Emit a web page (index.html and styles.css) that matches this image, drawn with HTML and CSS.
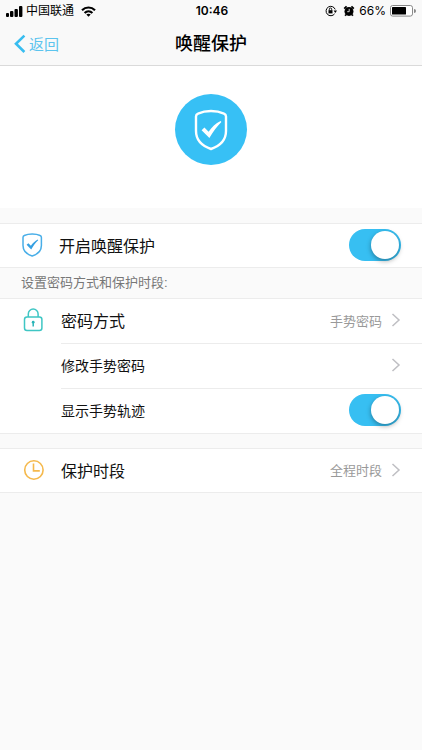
FILE: index.html
```
<!DOCTYPE html>
<html lang="zh-CN">
<head>
<meta charset="utf-8">
<meta name="viewport" content="width=device-width, initial-scale=1">
<title>唤醒保护</title>
<link rel="stylesheet" href="styles.css">
</head>

<body>
<header class="header">
	<div class="status">
		<div class="status-left">
			<svg width="17" height="11" viewBox="0 0 17 11">
				<rect x="0" y="7" width="3" height="4" rx="1"/>
				<rect x="4" y="5" width="3.4" height="6" rx="1"/>
				<rect x="8.500" y="3" width="3.400" height="8" rx="1"/>
				<rect x="13" y="0" width="3.400" height="11" rx="1"/>
			</svg>
			<span class="carrier">中国联通</span>
			<svg class="wifi" width="15" height="11" viewBox="0 0 15 11" fill="none" stroke="#000" stroke-width="2.200">
				<path d="M1 4.200C4.700.6 10.300.6 14 4.200"/>
				<path d="M3.600 7C5.800 4.900 9.200 4.900 11.400 7"/>
				<path d="M7.500 10.800L5.300 8.600C6.500 7.500 8.500 7.500 9.700 8.600Z" fill="#000" stroke="none"/>
			</svg>
		</div>
		<span class="clock">10:46</span>
		<div class="status-right">
			<svg width="12" height="12" viewBox="0 0 12 12" fill="none" stroke="#000">
				<path d="M9.600 8.800A4.700 4.700 0 1 1 10.200 4.400"/>
				<path d="M8.600 5.600H12L10.300 8Z" fill="#000" stroke="none"/>
				<rect x="3.500" y="5.200" width="4" height="3.200" fill="#000" stroke="none"/>
				<path d="M4.300 5.400V4.200a1.200 1.200 0 0 1 2.400 0v1.200" stroke-width=".9"/>
			</svg>
			<svg class="alarm" width="12" height="12" viewBox="0 0 12 12">
				<circle cx="6" cy="6.400" r="4.500"/>
				<path d="M1.200 3.600L3.600 1.400M8.400 1.400L10.800 3.600M3 9.600L2.200 10.800M9 9.600L9.800 10.800" stroke="#000" stroke-width="1.800"/>
				<path d="M6.200 3.900V6.700H4.200" stroke="#fff" stroke-width=".8" fill="none"/>
			</svg>
			<span class="percent">66%</span>
			<svg width="26" height="12" viewBox="0 0 26 12">
				<rect x=".5" y=".5" width="22" height="10.600" rx="2.200" fill="#fff" stroke="#888"/>
				<rect x="2" y="2" width="14" height="7.600" rx=".6"/>
				<path d="M24 4a2 2 0 0 1 0 4Z" fill="#888"/>
			</svg>
		</div>
	</div>
	<div class="navbar">
		<a href="#" class="back">
			<svg width="12" height="20" viewBox="0 0 12 20" fill="none" stroke="#38bdf0" stroke-width="2.600"><path d="M10.400 1.600L2 9.800L10.400 18"/></svg>
			<span>返回</span>
		</a>
		<h1>唤醒保护</h1>
	</div>
</header>

<div class="banner">
	<div class="logo">
		<svg width="34" height="42" viewBox="0 0 34 42">
			<path d="M17 2C13 2 7.500 3 4 4.600Q2 5.400 2 7.600V22C2 31 7 36.500 17 40C27 36.500 32 31 32 22V7.600Q32 5.400 30 4.600C26.500 3 21 2 17 2Z" fill="none" stroke="#fff" stroke-width="2.400"/>
			<path d="M7.600 21.200L10.400 18.600L14.600 22.800C17.800 18.300 21.500 14.400 26.600 12L27.400 13C23 17.500 19 22.600 15.400 29Z" fill="#fff"/>
		</svg>
	</div>
</div>

<ul class="list">
	<li class="row first">
		<svg class="icon" width="22" height="24" viewBox="0 0 22 24">
			<path d="M10.200 1C7 1 4.500 1.500 2.300 2.500Q1 3 1 4.500V12.500C1 18 4 21 10.200 23C16.400 21 19.400 18 19.400 12.500V4.500Q19.400 3 18.100 2.500C16 1.500 13.400 1 10.200 1Z" fill="none" stroke="#48aee8" stroke-width="1.500"/>
			<path d="M4.600 11.800L6.400 10.200L8.900 12.700C10.900 10.100 12.800 8.200 15.800 6.600L16.200 7.200C13.400 9.900 11.200 13 9.200 16.600Z" fill="#35a0e2"/>
		</svg>
		<label class="name" for="wake">开启唤醒保护</label>
		<input type="checkbox" class="switch" id="wake" checked>
	</li>
</ul>

<p class="tips">设置密码方式和保护时段:</p>

<ul class="list">
	<li>
		<a href="#" class="row">
			<svg class="icon" width="22" height="24" viewBox="0 0 22 24" fill="none" stroke="#3fc6c4" stroke-width="1.500">
				<rect x="2.500" y="9" width="17.400" height="13.600" rx="2.500"/>
				<path d="M6.300 9V6A4.900 4.900 0 0 1 16.100 6V9"/>
				<circle cx="11.200" cy="14.200" r="1.400" fill="#2ab5b8" stroke="none"/>
				<path d="M11.200 14V18.500" stroke="#2ab5b8"/>
			</svg>
			<span class="name">密码方式</span>
			<span class="value">手势密码</span>
			<svg class="arrow" width="10" height="14" viewBox="0 0 10 14"><path d="M1.500 1L8 7L1.500 13"/></svg>
		</a>
	</li>
	<li class="sub">
		<a href="#" class="row">
			<span class="name">修改手势密码</span>
			<svg class="arrow" width="10" height="14" viewBox="0 0 10 14"><path d="M1.500 1L8 7L1.500 13"/></svg>
		</a>
	</li>
	<li class="sub">
		<div class="row">
			<label class="name" for="track">显示手势轨迹</label>
			<input type="checkbox" class="switch" id="track" checked>
		</div>
	</li>
</ul>

<ul class="list period">
	<li>
		<a href="#" class="row">
			<svg class="icon" width="22" height="24" viewBox="0 0 22 24" fill="none" stroke="#f5b94d" stroke-width="1.600">
				<circle cx="11.900" cy="12" r="9.200"/>
				<path d="M11.500 5.500V12.900H17.800"/>
			</svg>
			<span class="name">保护时段</span>
			<span class="value">全程时段</span>
			<svg class="arrow" width="10" height="14" viewBox="0 0 10 14"><path d="M1.500 1L8 7L1.500 13"/></svg>
		</a>
	</li>
</ul>
</body>
</html>
```

FILE: styles.css
```
*{margin:0;padding:0;box-sizing:border-box;}
body{background:#fafafa;color:#111;font-family:"Liberation Sans","Noto Sans CJK SC",sans-serif;}
a{color:inherit;text-decoration:none;}
svg{display:block;flex:none;}

/* 顶部 */
.header{height:66px;background:#f9f9f9;border-bottom:1px solid #dadada;}
.status{display:grid;grid-template-columns:1fr auto 1fr;align-items:center;height:22px;padding:0 6px;font-size:12px;line-height:22px;color:#000;}
.status-left,.status-right{display:flex;align-items:center;}
.status-right{justify-content:flex-end;gap:4px;}
.carrier{margin-left:3px;}
.wifi{margin-left:7px;}
.alarm{margin-left:2px;}
.clock{padding-left:2px;font-family:Inter,sans-serif;font-weight:600;}
.percent{font-family:Inter,sans-serif;}
.navbar{display:grid;grid-template-columns:1fr auto 1fr;align-items:center;height:43px;padding:0 14px;}
.back{display:flex;align-items:center;gap:3px;font-size:15px;color:#5cc4ee;}
.navbar h1{font-size:18px;line-height:26px;font-weight:500;color:#000;}

.banner{display:flex;justify-content:center;padding:28px 0 43px;background:#fff;}
.logo{display:flex;align-items:center;justify-content:center;width:72px;height:71px;border-radius:50%;background:#37c0f5;}

/* 列表 */
.list{list-style:none;background:#fff;border-top:1px solid #ececec;border-bottom:1px solid #ececec;}
.banner + .list{margin-top:15px;}
.period{margin-top:14px;}
.row{display:flex;align-items:center;height:44px;padding:0 21px 2px 22px;}
.icon{margin-right:17px;}
.name{flex:1;font-size:16px;}
.first,.period .row{height:43px;}
.first .icon{margin-right:15px;}
.sub{margin-left:61px;border-top:1px solid #ececec;}
.sub .row{padding-left:0;}
.sub .name{font-size:14px;}
.value{margin-right:9px;font-size:13px;color:#999;}
.arrow{fill:none;stroke:#bfbfc3;stroke-width:1.5;}
.tips{padding:0 21px;font-size:13px;line-height:30px;color:#777;}

.switch{appearance:none;display:flex;align-items:center;width:52px;height:32px;padding:0 2px;border-radius:16px;background:#ddd;cursor:pointer;}
.switch::before{content:"";width:28px;height:28px;border-radius:50%;background:#fff;box-shadow:0 2px 5px rgba(0,0,0,.35);}
.switch:checked{justify-content:flex-end;background:#37bff2;}
```
